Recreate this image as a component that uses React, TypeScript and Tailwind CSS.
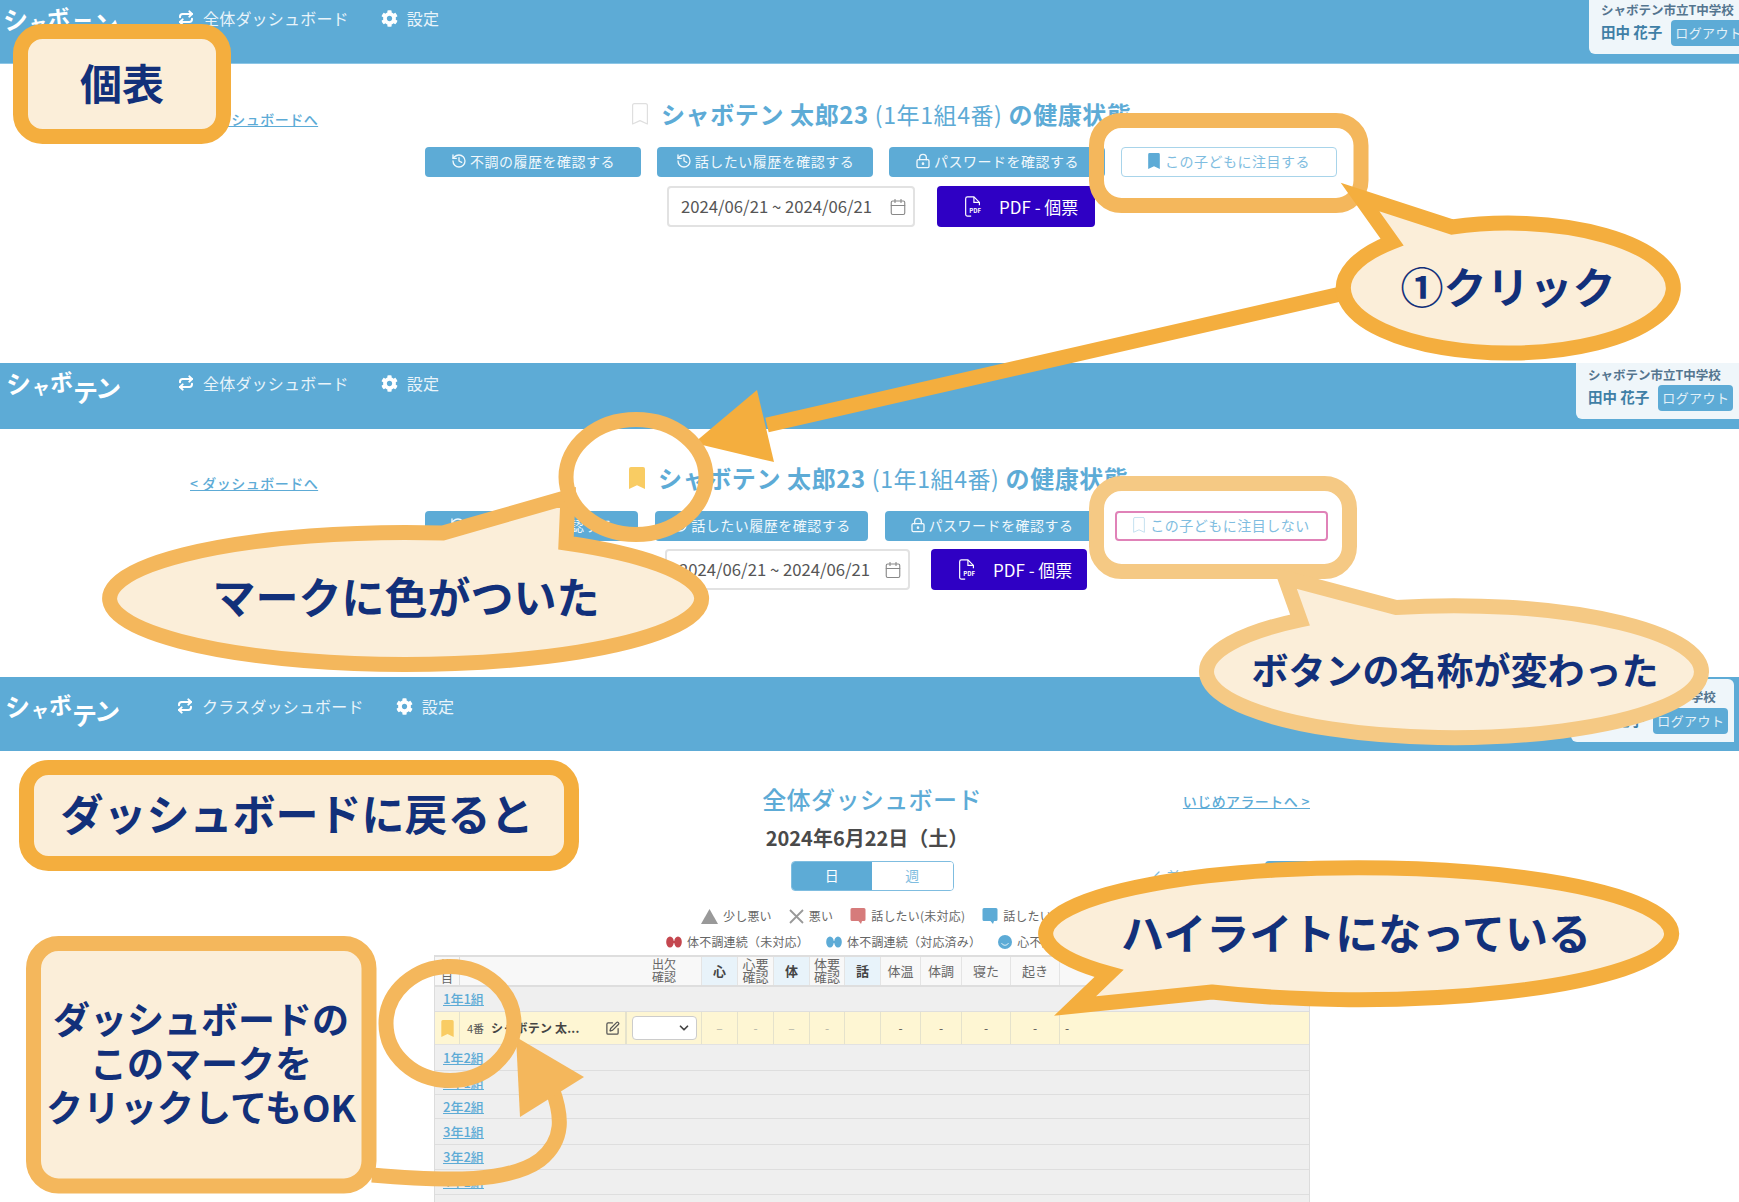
import { Calendar, ChevronDown, ChevronLeft, History, LockKeyhole, Repeat, SquarePen } from "lucide-react";
import { FaCog } from "react-icons/fa";

const ORANGE = "#f4ae3e";
const ORANGE_SOFT = "#f4b75c";
const ORANGE_PALE = "#f5c984";
const CREAM = "#fbeed9";

const STUDENT_BUTTONS = [
  { label: "不調の履歴を確認する", Icon: History },
  { label: "話したい履歴を確認する", Icon: History },
  { label: "パスワードを確認する", Icon: LockKeyhole },
];

const GROUP_ROWS = [
  { label: "2年1組", height: "h-[24px]" },
  { label: "2年2組", height: "h-[24px]" },
  { label: "3年1組", height: "h-[26px]" },
  { label: "3年2組", height: "h-[25px]" },
  { label: "4年1組", height: "h-[25px]" },
];

const HEAD_CELLS = [
  { label: "心", on: true, width: "w-[36px]" },
  { label: "心要\n確認", on: false, width: "w-[36px]" },
  { label: "体", on: true, width: "w-[36px]" },
  { label: "体要\n確認", on: false, width: "w-[35px]" },
  { label: "話", on: true, width: "w-[36px]" },
  { label: "体温", on: false, width: "w-[40px]" },
  { label: "体調", on: false, width: "w-[41px]" },
  { label: "寝た", on: false, width: "w-[49px]" },
  { label: "起き", on: false, width: "w-[49px]" },
];

const ROW_CELLS = [
  { value: "–", width: "w-[36px]", tone: "text-[#b5b5a8]" },
  { value: "-", width: "w-[36px]", tone: "text-[#b5b5a8]" },
  { value: "–", width: "w-[36px]", tone: "text-[#b5b5a8]" },
  { value: "-", width: "w-[35px]", tone: "text-[#b5b5a8]" },
  { value: "", width: "w-[36px]", tone: "" },
  { value: "-", width: "w-[40px]", tone: "text-[#555]" },
  { value: "-", width: "w-[41px]", tone: "text-[#555]" },
  { value: "-", width: "w-[49px]", tone: "text-[#555]" },
  { value: "-", width: "w-[49px]", tone: "text-[#555]" },
];

function BookmarkIcon({ filled, className }: { filled: boolean; className: string }) {
  return (
    <svg viewBox="0 0 16 22" className={className}>
      <path
        d={filled ? "M0 2a2 2 0 0 1 2-2h12a2 2 0 0 1 2 2v20l-8-3.800L0 22z" : "M.6 2.500a1.900 1.900 0 0 1 1.900-1.900h11a1.900 1.900 0 0 1 1.900 1.900v18.500l-7.400-3.400L.6 21z"}
        fill={filled ? "currentColor" : "none"}
        stroke={filled ? "none" : "currentColor"}
        strokeWidth={1.2}
        strokeLinejoin="round"
      />
    </svg>
  );
}

function PdfIcon() {
  return (
    <svg viewBox="0 0 18 24" className="h-[22px] w-[18px] text-white">
      <path d="M7 22H3a2 2 0 0 1-2-2V3a2 2 0 0 1 2-2h7l6 6v3" fill="none" stroke="currentColor" strokeWidth="1.3" />
      <path d="M10 1v6h6" fill="none" stroke="currentColor" strokeWidth="1.3" />
      <text x="5" y="18" fontSize="6.5" fontWeight="700" fill="currentColor">PDF</text>
    </svg>
  );
}

function Logo({ className }: { className: string }) {
  return (
    <div className={`flex shrink-0 items-start font-bold text-white ${className}`}>
      <span className="inline-block -rotate-6 text-[25px] leading-[25px]">シ</span>
      <span className="inline-block mt-[7px] ml-[1px] text-[18px] leading-[18px]">ャ</span>
      <span className="inline-block -rotate-6 text-[23px] leading-[23px]">ボ</span>
      <span className="inline-block mt-[9px] text-[25px] leading-[25px]">テ</span>
      <span className="inline-block mt-[5px] -ml-[2px] rotate-6 text-[25px] leading-[25px]">ン</span>
    </div>
  );
}

function Header({
  height,
  logoClass,
  navClass,
  link,
  children,
}: {
  height: string;
  logoClass: string;
  navClass: string;
  link: string;
  children: React.ReactNode;
}) {
  return (
    <header className={`flex items-start bg-[#5dabd6] ${height}`}>
      <Logo className={logoClass} />
      <nav className={`flex items-center text-[16px] tracking-[0.2px] text-[#e9f4fa] ${navClass}`}>
        <Repeat size={16} strokeWidth={3} className="mr-[9px] text-white" />
        <span>{link}</span>
        <FaCog size={17} className="ml-[32px] mr-[9px] text-white" />
        <span>設定</span>
      </nav>
      {children}
    </header>
  );
}

function UserBox({ className, nameRow }: { className: string; nameRow: string }) {
  return (
    <div className={`ml-auto w-[163px] shrink-0 rounded-bl-md bg-[#eff6fa] pl-[12px] ${className}`}>
      <div className="whitespace-nowrap text-[12.5px] font-bold leading-[20px] text-[#54758f]">シャボテン市立T中学校</div>
      <div className={`flex items-center gap-[9px] ${nameRow}`}>
        <span className="whitespace-nowrap pb-[2px] text-[14.5px] font-bold text-[#3f7fa6]">田中 花子</span>
        <span className="flex h-[26px] w-[75px] shrink-0 items-center justify-center rounded bg-[#5dabd6] pb-[1px] text-[13px] tracking-[0.4px] text-[#e3f1f8]">
          ログアウト
        </span>
      </div>
    </div>
  );
}

function StudentDetail({ active }: { active: boolean }) {
  return (
    <div className={active ? "pt-[33px]" : "pt-[34px]"}>
      <div className="flex h-[32px] items-center">
        <a className="ml-[190px] mt-[10px] w-[128px] whitespace-nowrap text-[14px] font-medium tracking-[0.5px] text-[#5dabd6] underline">
          &lt; ダッシュボードへ
        </a>
        <BookmarkIcon
          filled={active}
          className={active ? "ml-[310px] h-[22px] w-[18px] text-[#f9cc63]" : "ml-[313px] h-[22px] w-[18px] text-[#dfdfdf]"}
        />
        <h1 className="ml-[12px] flex items-baseline whitespace-pre text-[24px] font-bold tracking-[0.6px] text-[#5dabd6]">
          シャボテン 太郎23 <span className="text-[23px] font-normal">(1年1組4番)</span> の健康状態
        </h1>
      </div>
      <div className={active ? "ml-[425px] mt-[17px] flex gap-[17px]" : "ml-[425px] mt-[17px] flex gap-[16px]"}>
        {STUDENT_BUTTONS.map(({ label, Icon }) => (
          <button
            key={label}
            className={`flex h-[30px] items-center justify-center gap-[3px] rounded bg-[#5dabd6] pb-[2px] text-[14px] tracking-[0.5px] text-[#f0f8fc] ${
              active ? "w-[213px]" : "w-[216px]"
            }`}
          >
            <Icon size={16} />
            {label}
          </button>
        ))}
        <button
          className={`flex h-[30px] items-center justify-center gap-[5px] rounded bg-white pb-[2px] text-[14px] tracking-[0.5px] text-[#7fbde0] ${
            active ? "w-[213px] border-2 border-[#e082b8]" : "w-[216px] border border-[#a8d4ea]"
          }`}
        >
          <BookmarkIcon
            filled={!active}
            className={active ? "h-[16px] w-[12px] text-[#bcdcee]" : "h-[16px] w-[12px] text-[#5dabd6]"}
          />
          {active ? "この子どもに注目しない" : "この子どもに注目する"}
        </button>
      </div>
      <div className={active ? "ml-[665px] mt-[8px] flex gap-[21px]" : "ml-[667px] mt-[9px] flex gap-[22px]"}>
        <div
          className={`flex h-[41px] items-center justify-between rounded border-2 border-[#e2e2e2] bg-white pl-[12px] pr-[6px] text-[16.7px] text-[#555] ${
            active ? "w-[245px]" : "w-[248px]"
          }`}
        >
          <span className="whitespace-nowrap">2024/06/21 ~ 2024/06/21</span>
          <Calendar size={18} strokeWidth={1.5} className="text-[#888]" />
        </div>
        <button
          className={`flex h-[41px] items-center gap-[17px] rounded bg-[#2f00c4] pl-[27px] text-[17px] text-white ${
            active ? "w-[156px]" : "w-[158px]"
          }`}
        >
          <PdfIcon />
          <span className="whitespace-nowrap">PDF - 個票</span>
        </button>
      </div>
    </div>
  );
}

function LegendItem({ icon, label }: { icon: React.ReactNode; label: string }) {
  return (
    <span className="flex items-center gap-[5px] whitespace-nowrap text-[12px] tracking-[0.2px] text-[#666]">
      {icon}
      {label}
    </span>
  );
}

function Speech({ color }: { color: string }) {
  return (
    <svg viewBox="0 0 16 18" className="h-[18px] w-[16px]">
      <path d="M2 1h12a1.500 1.500 0 0 1 1.500 1.500v10a1.500 1.500 0 0 1-1.500 1.500h-2l-1 3-2.500-3H2A1.500 1.500 0 0 1 .5 12.500v-10A1.500 1.500 0 0 1 2 1z" fill={color} />
    </svg>
  );
}

function Pills({ color }: { color: string }) {
  return (
    <svg viewBox="0 0 16 12" className="h-[12px] w-[16px]">
      <ellipse cx="4" cy="6" rx="3.800" ry="5.500" fill={color} />
      <ellipse cx="12" cy="6" rx="3.800" ry="5.500" fill={color} />
      <path d="M6 6h4" stroke={color} strokeWidth="2" />
    </svg>
  );
}

function GroupRow({ label, height }: { label: string; height: string }) {
  return (
    <div className={`flex items-center border-b border-[#dedede] bg-[#efefef] pl-[8px] text-[13px] font-medium ${height}`}>
      <a className="text-[#5dabd6] underline">{label}</a>
    </div>
  );
}

function Dashboard() {
  return (
    <main className="ml-[434px] w-[876px] pt-[30px] text-[#555]">
      <div className="grid grid-cols-[1fr_auto_1fr]">
        <div />
        <h1 className="h-[36px] text-[24px] font-medium leading-[36px] tracking-[0.4px] text-[#5dabd6]">全体ダッシュボード</h1>
        <a className="mt-[10px] justify-self-end whitespace-nowrap text-[14px] font-medium tracking-[0.4px] text-[#5dabd6] underline">
          いじめアラートへ &gt;
        </a>
      </div>
      <div className="mt-[7px] h-[28px] pr-[10px] text-center text-[20px] font-bold leading-[28px] text-[#4a4a4a]">
        2024年6月22日（土）
      </div>
      <div className="mt-[9px] grid h-[30px] grid-cols-[1fr_163px_1fr]">
        <div />
        <div className="flex overflow-hidden rounded border border-[#7fbde0] pb-0 text-[14px]">
          <span className="flex w-1/2 items-center justify-center bg-[#5dabd6] pb-[2px] text-white">日</span>
          <span className="flex w-1/2 items-center justify-center bg-white pb-[2px] text-[#7fbde0]">週</span>
        </div>
        <div className="flex items-center justify-end text-[14px] text-[#7fbde0]">
          <ChevronLeft size={16} />
          <span className="ml-[2px] mr-[70px]">前日</span>
          <span className="h-[30px] w-[45px] rounded bg-[#5dabd6]" />
        </div>
      </div>
      <div className="ml-[267px] mt-[15px] flex h-[20px] items-center gap-[17px]">
        <LegendItem
          label="少し悪い"
          icon={
            <svg viewBox="0 0 17 15" className="h-[15px] w-[17px]">
              <path d="M8.500 0 17 15H0z" fill="#999" />
            </svg>
          }
        />
        <LegendItem
          label="悪い"
          icon={
            <svg viewBox="0 0 15 15" className="h-[15px] w-[15px]">
              <path d="M1 1l13 13M14 1 1 14" stroke="#999" strokeWidth="1.800" />
            </svg>
          }
        />
        <LegendItem label="話したい(未対応)" icon={<Speech color="#d67b7b" />} />
        <LegendItem label="話したい(対応済み)" icon={<Speech color="#5dabd6" />} />
      </div>
      <div className="ml-[232px] mt-[6px] flex h-[20px] items-center gap-[17px]">
        <LegendItem label="体不調連続（未対応）" icon={<Pills color="#c4474f" />} />
        <LegendItem label="体不調連続（対応済み）" icon={<Pills color="#5dabd6" />} />
        <LegendItem
          label="心不調連続（未対応）"
          icon={
            <svg viewBox="0 0 14 14" className="h-[14px] w-[14px]">
              <circle cx="7" cy="7" r="7" fill="#5dabd6" />
              <path d="M3.500 8a3.800 3.800 0 0 0 7 0" fill="none" stroke="#d9edf7" strokeWidth="1" />
            </svg>
          }
        />
      </div>
      <div className="mt-[3px] border-x border-[#dcdcdc]">
        <div className="flex h-[32px] border-y-2 border-[#dedede] bg-[#f8f8f8] pb-0 text-[12px] leading-[13px] text-[#666]">
          <div className="flex w-[25px] items-center justify-center border-r border-[#dedede] text-center">注<br />目</div>
          <div className="flex w-[241px] justify-end">
            <div className="flex w-[74px] items-center justify-center pb-[2px] text-center">出欠<br />確認</div>
          </div>
          {HEAD_CELLS.map((cell) => (
            <div
              key={cell.label}
              className={`flex items-center justify-center whitespace-pre-line border-l border-[#e4e4e4] pb-[2px] text-center ${cell.width} ${
                cell.on ? "bg-[#e8f3fa] text-[13px] font-bold text-[#444]" : "text-[13px]"
              }`}
            >
              {cell.label}
            </div>
          ))}
          <div className="flex-1 border-l border-[#e4e4e4]" />
        </div>
        <GroupRow label="1年1組" height="h-[25px]" />
        <div className="flex h-[33px] items-stretch border-b border-[#e2e2e2] bg-[#fef6d3] text-[12px]">
          <div className="flex w-[25px] items-center justify-center border-r border-[#e5e2cc]">
            <BookmarkIcon filled className="h-[17px] w-[13px] text-[#f9cc63]" />
          </div>
          <div className="flex w-[167px] items-center border-r-2 border-[#e5e2cc] pl-[7px] pr-[5px]">
            <span className="mr-[7px] text-[11px] text-[#555]">4番</span>
            <span className="whitespace-nowrap font-bold tracking-[0.2px] text-[#444]">シャボテン 太...</span>
            <SquarePen size={15} className="ml-auto text-[#555]" />
          </div>
          <div className="flex w-[74px] items-center justify-center">
            <div className="flex h-[24px] w-[65px] items-center justify-end rounded border border-[#ccc] bg-white pr-[5px]">
              <ChevronDown size={14} strokeWidth={3} className="text-[#444]" />
            </div>
          </div>
          {ROW_CELLS.map((cell, i) => (
            <div key={i} className={`flex items-center justify-center border-l border-[#e5e2cc] ${cell.width} ${cell.tone}`}>
              {cell.value}
            </div>
          ))}
          <div className="flex flex-1 items-center border-l border-[#e5e2cc] pl-[5px] text-[#555]">-</div>
        </div>
        <GroupRow label="1年2組" height="h-[26px]" />
        {GROUP_ROWS.map((row) => (
          <GroupRow key={row.label} label={row.label} height={row.height} />
        ))}
        <div className="h-[7px] bg-[#efefef]" />
      </div>
    </main>
  );
}

function Label({ className, children }: { className: string; children: React.ReactNode }) {
  return (
    <div
      className={`absolute -translate-x-1/2 -translate-y-1/2 whitespace-nowrap text-center font-bold text-[#12307a] ${className}`}
    >
      {children}
    </div>
  );
}

function Annotations() {
  return (
    <>
      <svg viewBox="0 0 1739 1202" className="absolute inset-0 h-[1202px] w-[1739px]">
        <g fill={CREAM} strokeLinejoin="miter" strokeWidth="15">
          <rect x="20.500" y="31.500" width="203" height="105" rx="22" stroke={ORANGE} />

          <rect x="1096.500" y="120.500" width="264.500" height="85" rx="25" fill="none" stroke={ORANGE_SOFT} />
          <line x1="1345" y1="293" x2="767" y2="425" stroke={ORANGE} />
          <polygon points="694,443 757,390 774,462" fill={ORANGE} />
          <path d="M1452 227 A165 65 0 1 1 1392 242 L1360 197 Z" stroke={ORANGE} />

          <path d="M566 543 A296 66 0 1 1 443 533 L568 497 Z" stroke={ORANGE_SOFT} />
          <ellipse cx="636" cy="477" rx="70" ry="57.500" fill="none" stroke={ORANGE_SOFT} />

          <rect x="1096.500" y="483.500" width="253" height="88" rx="25" fill="none" stroke={ORANGE_PALE} />
          <path d="M1396 607.500 A247.500 66 0 1 1 1300 620 L1285 578 Z" stroke={ORANGE_PALE} />

          <rect x="26.500" y="767.500" width="545" height="96" rx="22" stroke={ORANGE} />

          <path d="M372 1175 C450 1182 510 1182 540 1160 C565 1140 562 1115 552 1088" fill="none" stroke={ORANGE_SOFT} />
          <polygon points="516,1037 584,1077 520,1117" fill={ORANGE_SOFT} />
          <ellipse cx="450" cy="1023.500" rx="64" ry="57" fill="none" stroke={ORANGE_SOFT} />
          <rect x="33.500" y="943.500" width="335.500" height="242.500" rx="25" stroke={ORANGE_SOFT} />

          <path d="M1212 992 L1075 1006 L1109 973.500 A313 66 0 1 1 1212 992 Z" stroke={ORANGE} />
        </g>
      </svg>
      <Label className="left-[122px] top-[81px] text-[42px]">個表</Label>
      <Label className="left-[1508px] top-[285px] text-[43px]">①クリック</Label>
      <Label className="left-[406px] top-[595px] text-[43px]">マークに色がついた</Label>
      <Label className="left-[1455px] top-[670px] text-[37px]">ボタンの名称が変わった</Label>
      <Label className="left-[297px] top-[812px] text-[43px]">ダッシュボードに戻ると</Label>
      <Label className="left-[1356px] top-[931px] text-[43px]">ハイライトになっている</Label>
      <Label className="left-[201px] top-[1062px] text-[37px] leading-[44px]">
        ダッシュボードの
        <br />
        このマークを
        <br />
        クリックしてもOK
      </Label>
    </>
  );
}

export default function App() {
  return (
    <div className="relative h-[1202px] w-[1739px] overflow-hidden bg-white font-['Noto_Sans_CJK_JP','Noto_Sans',sans-serif]">
      <section className="h-[363px]">
        <Header height="h-[64px] border-b border-[#8cc6e6]" logoClass="w-[178px] pl-[3px] pt-[6px]" navClass="h-[36px]" link="全体ダッシュボード">
          <UserBox className="mr-[-13px] h-[54px]" nameRow="mt-0" />
        </Header>
        <StudentDetail active={false} />
      </section>
      <section className="h-[314px]">
        <Header height="h-[66px]" logoClass="w-[178px] pl-[6px] pt-[7px]" navClass="h-[40px]" link="全体ダッシュボード">
          <UserBox className="h-[56px] pt-[2px]" nameRow="mt-0" />
        </Header>
        <StudentDetail active />
      </section>
      <section>
        <Header height="h-[74px]" logoClass="w-[177px] pl-[5px] pt-[16px]" navClass="h-[58px]" link="クラスダッシュボード">
          <UserBox className="mr-[5px] mt-[2px] h-[63px] rounded-t-md pt-[8px]" nameRow="mt-[1px]" />
        </Header>
        <Dashboard />
      </section>
      <Annotations />
    </div>
  );
}
